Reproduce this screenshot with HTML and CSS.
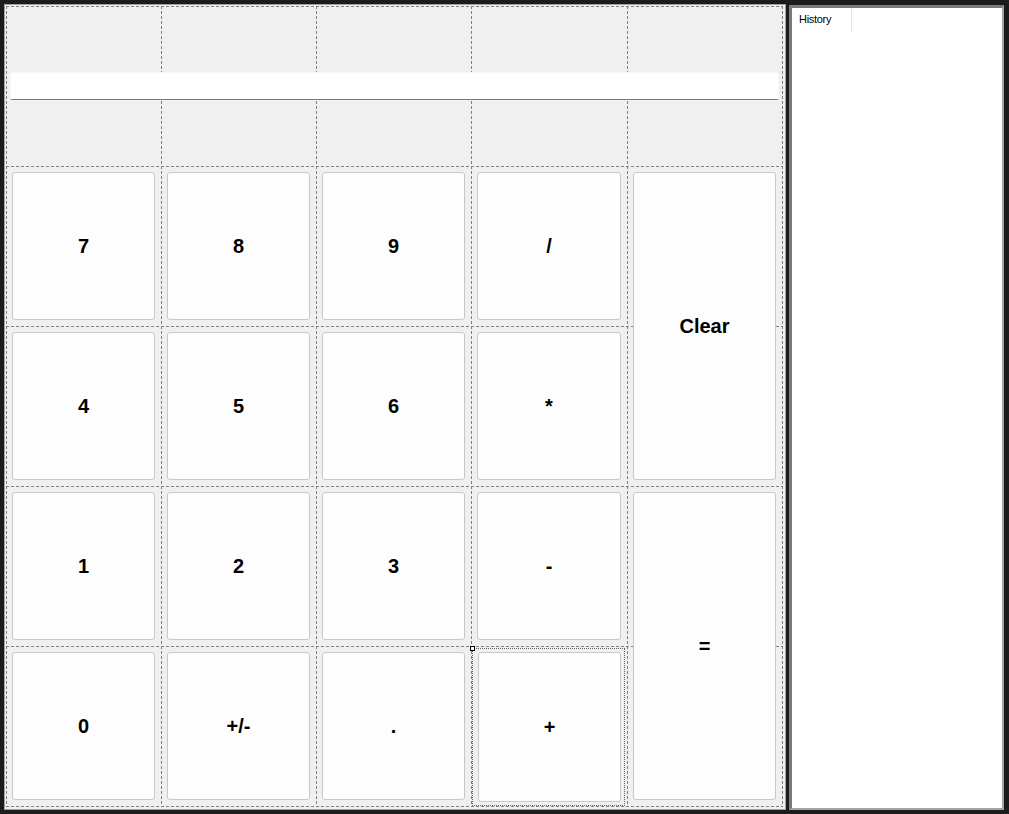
FILE: index.html
```html
<!DOCTYPE html>
<html lang="en">
<head>
  <meta charset="UTF-8" />
  <meta name="viewport" content="width=device-width, initial-scale=1.0"/>
  <title>Calculator</title>
  <link rel="stylesheet" href="styles.css">
</head>
<body>

  <div class="form">
    <div class="layout">
      <div class="pad">
        <input id="display" class="display" type="text" value="">

        <button class="key">7</button>
        <button class="key">8</button>
        <button class="key">9</button>
        <button class="key">/</button>
        <button class="key tall">Clear</button>

        <button class="key">4</button>
        <button class="key">5</button>
        <button class="key">6</button>
        <button class="key">*</button>

        <button class="key">1</button>
        <button class="key">2</button>
        <button class="key">3</button>
        <button class="key">-</button>
        <button class="key tall">=</button>

        <button class="key">0</button>
        <button class="key">+/-</button>
        <button class="key">.</button>
        <div class="selected">
          <span class="handle"></span>
          <button class="key">+</button>
        </div>
      </div>
    </div>

    <div class="history">
      <div class="history-head">
        <div class="col-title">History</div>
      </div>
      <div class="history-list"></div>
    </div>
  </div>

</body>
</html>
```

FILE: styles.css
```css
body {
  margin: 0;
  padding: 4px;
  background-color: #1c1c1c;
  font-family: 'Liberation Sans', Arial, sans-serif;
}

.form {
  display: flex;
  gap: 3px;
  height: 806px;
}

/* left side: table layout panel in design view */
.layout {
  width: 782px;
  box-sizing: border-box;
  border: 1px solid #a2a2a2;
  padding: 1px 2px 2px 1px;
  background: #f0f0f0;
}

.pad {
  --dv: repeating-linear-gradient(to bottom, #808080 0 3px, transparent 3px 5px);
  --dh: repeating-linear-gradient(to right, #808080 0 3px, transparent 3px 5px);
  display: grid;
  grid-template-columns: 154px 154px 154px 155px 154px;
  grid-template-rows: repeat(5, 159px);
  gap: 1px;
  padding: 1px;
  width: 777px;
  height: 801px;
  box-sizing: border-box;
  background:
    var(--dv) 0 0 / 1px 100% no-repeat,
    var(--dv) 155px 0 / 1px 100% no-repeat,
    var(--dv) 310px 0 / 1px 100% no-repeat,
    var(--dv) 465px 0 / 1px 100% no-repeat,
    var(--dv) 621px 0 / 1px 100% no-repeat,
    var(--dv) 776px 0 / 1px 100% no-repeat,
    var(--dh) 0 0 / 100% 1px no-repeat,
    var(--dh) 0 160px / 100% 1px no-repeat,
    var(--dh) 0 320px / 100% 1px no-repeat,
    var(--dh) 0 480px / 100% 1px no-repeat,
    var(--dh) 0 640px / 100% 1px no-repeat,
    var(--dh) 0 800px / 100% 1px no-repeat;
}

.display {
  grid-column: 1 / -1;
  align-self: start;
  margin: 65px 3px 0 3px;
  height: 28px;
  box-sizing: border-box;
  border: 1px solid #f7f7f7;
  border-bottom-color: #7a7a7a;
  border-radius: 2px;
  background: #fff;
  padding: 0 4px;
  outline: none;
}

.key {
  margin: 5px 6px 6px 5px;
  border: 1px solid #c8c8c8;
  border-radius: 3px;
  background: #fdfdfd;
  color: #000;
  font-family: 'Liberation Sans', Arial, sans-serif;
  font-weight: bold;
  font-size: 20px;
  padding: 0;
  cursor: pointer;
}

.key:hover {
  background: #e5f1fb;
}

.tall {
  grid-row: span 2;
}

.selected {
  position: relative;
  display: flex;
  margin: 1px 2px 0 0;
  border: 1px dotted #666;
}

.selected .key {
  flex: 1;
  margin: 3px 3px 3px 5px;
}

.handle {
  position: absolute;
  left: -3px;
  top: -3px;
  width: 5px;
  height: 5px;
  box-sizing: border-box;
  border: 1px solid #000;
  background: #fff;
}

/* right side: history list view */
.history {
  width: 215px;
  margin-top: 1px;
  box-sizing: border-box;
  border-style: solid;
  border-width: 3px 2px 2px 3px;
  border-color: #7a7a7a #a4a4a4 #a4a4a4 #7a7a7a;
  background: #fff;
  display: flex;
  flex-direction: column;
}

.history-head {
  display: flex;
  height: 25px;
}

.col-title {
  width: 60px;
  box-sizing: border-box;
  border-right: 1px solid #e5e5e5;
  padding: 5px 0 0 7px;
  font-size: 11px;
  letter-spacing: -0.3px;
  color: #000;
}

.history-list {
  flex: 1;
}
```
